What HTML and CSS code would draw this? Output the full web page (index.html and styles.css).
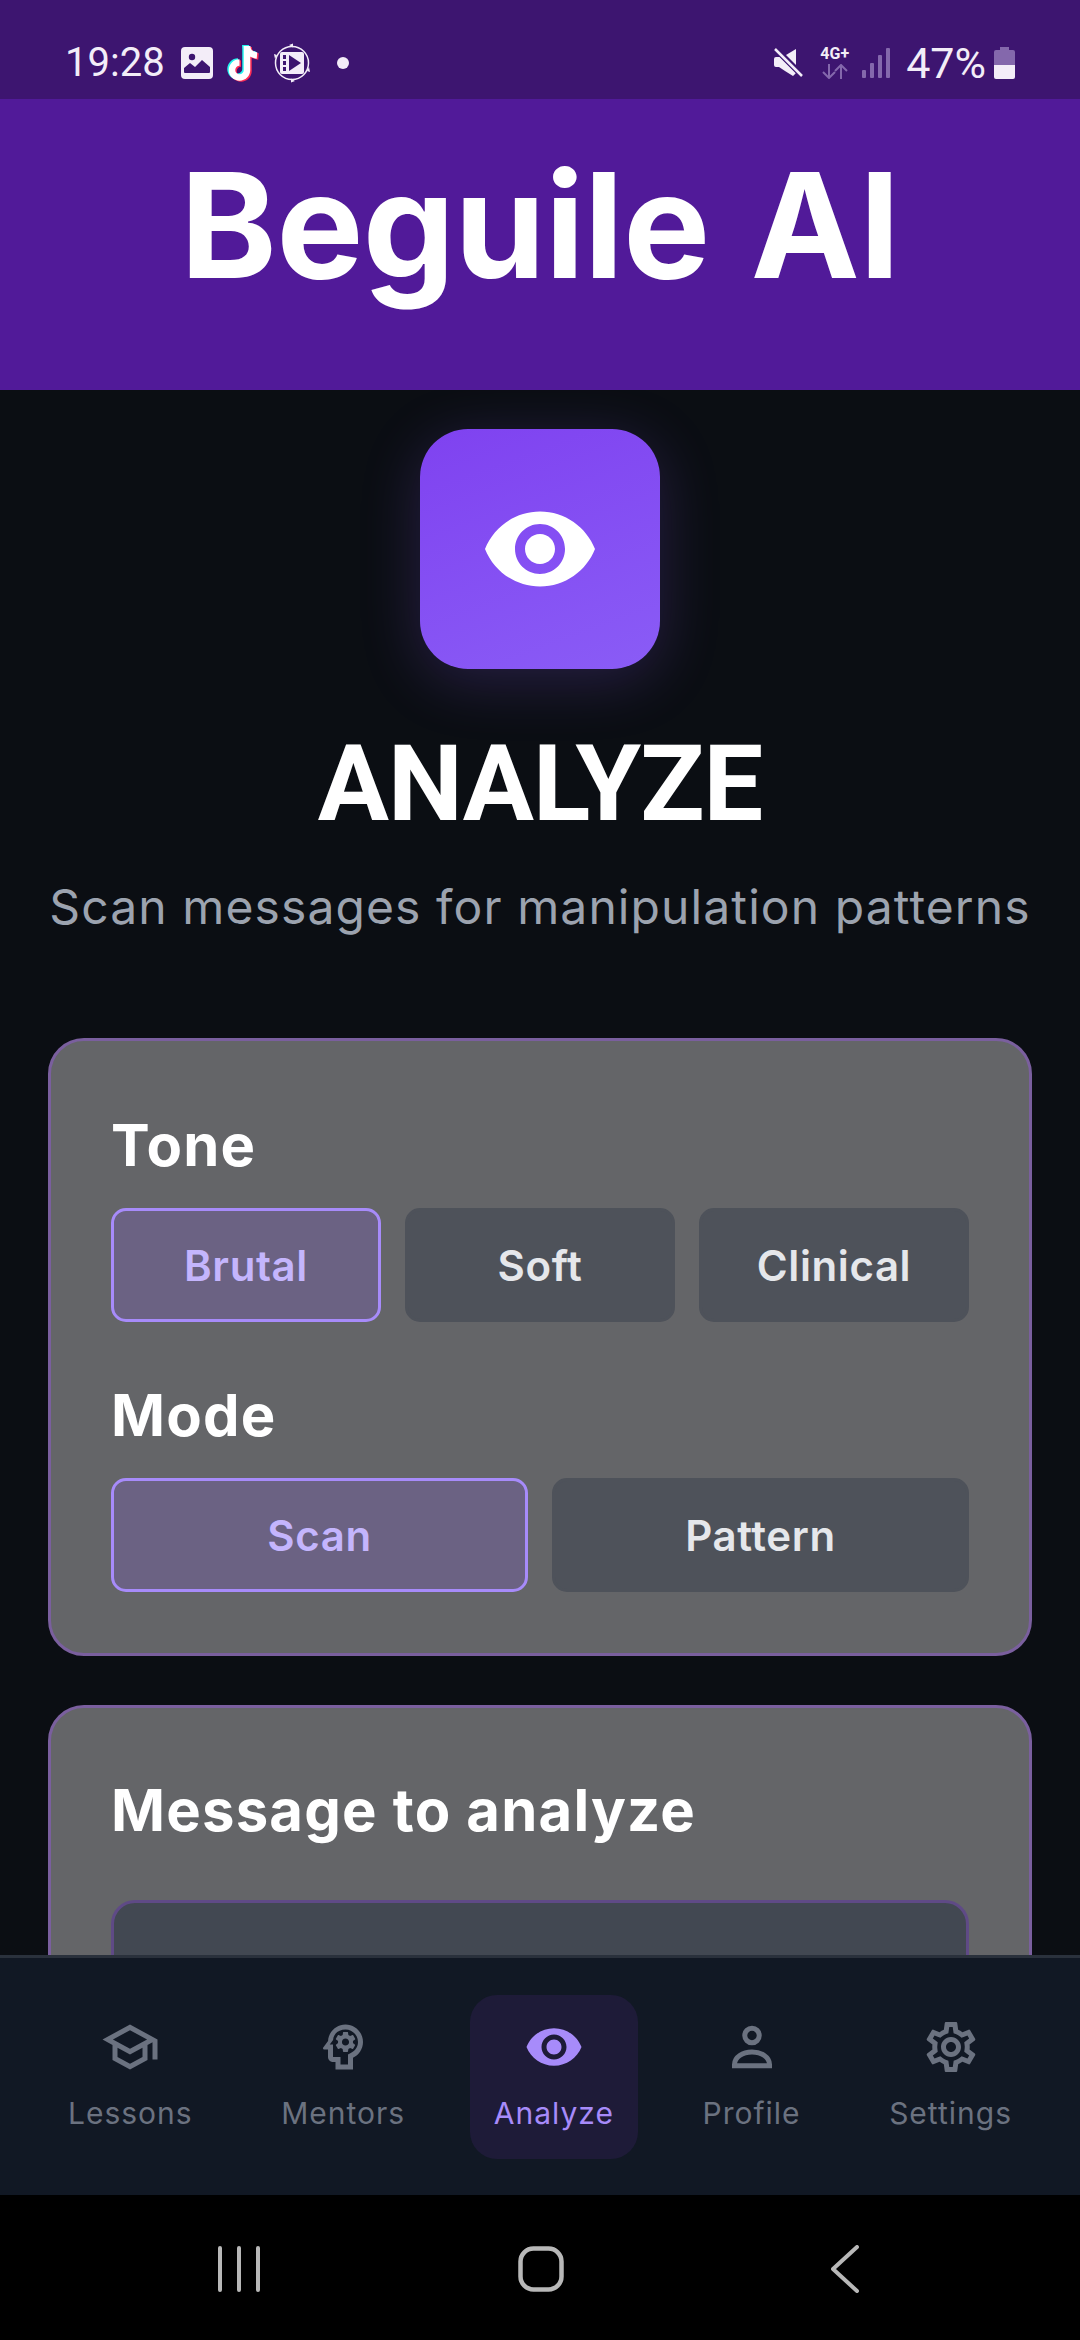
FILE: index.html
```html
<!DOCTYPE html>
<html>
<head>
    <title>Beguile AI</title>
    <meta name="viewport" content="width=device-width, initial-scale=1">
    <link rel="stylesheet" href="styles.css">
</head>
<body>
    <div class="app">
        <div class="status-bar">
            <div class="status-left">
                <span class="time">19:28</span>
                <svg class="ic-gallery" width="32" height="32" viewBox="0 0 32 32">
                    <rect width="32" height="32" rx="4" fill="#f3edf8"/>
                    <circle cx="11" cy="10" r="3.2" fill="#3d1570"/>
                    <path d="M3 25v-4l6-5 5 4 7-7 8 7v5q0 1-1 1H4q-1 0-1-1z" fill="#3d1570"/>
                    <path d="M5 28h22v1H5z" fill="#f3edf8"/>
                </svg>
                <svg class="ic-tiktok" width="36" height="40" viewBox="0 0 36 40" fill="none">
                    <g stroke-width="6.5">
                        <path d="M20 3v24a7.5 7.5 0 1 1-7.5-7.5" stroke="#25f4ee" transform="translate(-1.5 -1)"/>
                        <path d="M20 3c0 5 4 9 10 9.500" stroke="#25f4ee" transform="translate(-1.500 -1)"/>
                        <path d="M20 3v24a7.5 7.5 0 1 1-7.5-7.5" stroke="#fe2c55" transform="translate(1.500 1)"/>
                        <path d="M20 3c0 5 4 9 10 9.500" stroke="#fe2c55" transform="translate(1.500 1)"/>
                        <path d="M20 3v24a7.500 7.500 0 1 1-7.500-7.500" stroke="#fff"/>
                        <path d="M20 3c0 5 4 9 10 9.500" stroke="#fff"/>
                    </g>
                </svg>
                <svg class="ic-video" width="36" height="40" viewBox="0 0 36 40" fill="none">
                    <circle cx="18" cy="20" r="16.500" stroke="#f3edf8" stroke-width="1.500"/>
                    <path d="M15 2l4-1.500v4zM21 38l-4 1.500v-4zM33 28l2-4 1 5zM3 12l-2 4-1-5z" fill="#f3edf8"/>
                    <rect x="6" y="9" width="24" height="22" rx="2" fill="#f3edf8"/>
                    <path d="M9 12h3v4H9zM9 18h3v4H9zM9 24h3v4H9z" fill="#3d1570"/>
                    <path d="M15 12l12 8-12 8z" fill="#3d1570"/>
                </svg>
                <span class="status-dot"></span>
            </div>
            <div class="status-right">
                <svg class="ic-mute" width="30" height="30" viewBox="0 0 30 30">
                    <path d="M1 11q0-2 2-2h4l4 4 12 12-3 3-8-5-6-4H3q-2 0-2-2z" fill="#f3edf8"/>
                    <path d="M13 7l10-6v16z" fill="#f3edf8"/>
                    <path d="M3 2l26 26" stroke="#3d1570" stroke-width="5"/>
                    <path d="M2 1l27 27" stroke="#f3edf8" stroke-width="2.500"/>
                </svg>
                <div class="net">
                    <span class="net-label">4G+</span>
                    <svg width="26" height="15" viewBox="0 0 26 15" fill="none" stroke="#8468ac" stroke-width="2">
                        <path d="M7 0v14M1 8l6 6 6-6"/>
                        <path d="M19 15V1M13 7l6-6 6 6"/>
                    </svg>
                </div>
                <svg class="ic-signal" width="28" height="30" viewBox="0 0 28 30" fill="#8468ac">
                    <rect x="0" y="22" width="4" height="8" rx="1"/>
                    <rect x="8" y="15" width="4" height="15" rx="1"/>
                    <rect x="16" y="7" width="4" height="23" rx="1"/>
                    <rect x="24" y="0" width="4" height="30" rx="1"/>
                </svg>
                <span class="battery-text">47%</span>
                <svg class="ic-battery" width="21" height="32" viewBox="0 0 21 32">
                    <path d="M6 0h9v3h4q2 0 2 2v13H0V5q0-2 2-2h4z" fill="#8468ac"/>
                    <path d="M0 18h21v12q0 2-2 2H2q-2 0-2-2z" fill="#f3edf8"/>
                </svg>
            </div>
        </div>

        <header class="app-header">Beguile AI</header>

        <main class="content">
            <div class="hero-icon">
                <svg width="120" height="120" viewBox="0 0 24 24" fill="#fff">
                    <path d="M12 4.500C7 4.500 2.730 7.610 1 12c1.730 4.390 6 7.500 11 7.500s9.270-3.110 11-7.500c-1.730-4.390-6-7.500-11-7.500zM12 17c-2.760 0-5-2.240-5-5s2.240-5 5-5 5 2.240 5 5-2.240 5-5 5zm0-8c-1.660 0-3 1.340-3 3s1.340 3 3 3 3-1.340 3-3-1.340-3-3-3z"/>
                </svg>
            </div>
            <h1 class="page-title">ANALYZE</h1>
            <p class="page-sub">Scan messages for manipulation patterns</p>

            <section class="card">
                <h2 class="card-title">Tone</h2>
                <div class="options">
                    <button class="option active">Brutal</button>
                    <button class="option">Soft</button>
                    <button class="option">Clinical</button>
                </div>
                <h2 class="card-title mode-title">Mode</h2>
                <div class="options">
                    <button class="option active">Scan</button>
                    <button class="option">Pattern</button>
                </div>
            </section>

            <section class="card card-message">
                <h2 class="card-title">Message to analyze</h2>
                <div class="message-input"></div>
            </section>
        </main>

        <nav class="tabs">
            <div class="tab">
                <svg width="60" height="60" viewBox="0 0 24 24" fill="#6b7280"><path d="M12 3L1 9l4 2.180v6L12 21l7-3.820v-6l2-1.090V17h2V9L12 3zm6.820 6L12 12.720 5.180 9 12 5.280 18.820 9zM17 15.990l-5 2.730-5-2.730v-3.720L12 15l5-2.730v3.720z"/></svg>
                <span>Lessons</span>
            </div>
            <div class="tab">
                <svg width="60" height="60" viewBox="0 0 24 24" fill="#6b7280"><path d="M13 3C9.250 3 6.200 5.940 6.020 9.640L4.100 12.200C3.850 12.530 4.090 13 4.500 13H6v3c0 1.100.9 2 2 2h1v3h7v-4.680c2.360-1.120 4-3.530 4-6.320C20 6.130 16.870 3 13 3zm1 12.970V19h-3v-3H8v-5H6.700l1.330-1.770C8.210 6.570 10.350 5 13 5c2.760 0 5 2.240 5 5 0 2.090-1.290 3.880-4 4.970z"/><path d="M15.820 7.220l-1 .4c-.21-.16-.43-.29-.67-.39L14 6.170c-.02-.1-.1-.17-.2-.17h-1.600c-.1 0-.18.07-.19.17l-.15 1.060c-.24.1-.47.23-.67.39l-1-.4c-.09-.03-.2 0-.24.09l-.8 1.380c-.05.09-.03.2.05.26l.85.66c-.03.12-.05.26-.05.39s.01.26.03.39l-.84.66c-.08.06-.1.17-.05.25l.8 1.390c.05.09.15.12.25.09l.99-.4c.21.16.43.29.68.39l.14 1.060c.02.1.1.17.2.17h1.600c.1 0 .18-.07.2-.17l.15-1.060c.24-.1.47-.23.67-.39l.99.4c.09.04.2 0 .24-.09l.8-1.390c.05-.09.03-.19-.05-.25l-.83-.66c.02-.13.03-.26.03-.39 0-.14-.01-.27-.03-.39l.85-.66c.08-.06.1-.17.05-.26l-.8-1.380c-.05-.09-.16-.12-.25-.09zM13 11.430c-.79 0-1.430-.64-1.430-1.430s.64-1.430 1.430-1.430 1.430.64 1.430 1.430-.64 1.430-1.430 1.430z"/></svg>
                <span>Mentors</span>
            </div>
            <div class="tab active">
                <svg width="60" height="60" viewBox="0 0 24 24" fill="#a78bfa"><path d="M12 4.500C7 4.500 2.730 7.610 1 12c1.730 4.390 6 7.500 11 7.500s9.270-3.110 11-7.500c-1.730-4.390-6-7.500-11-7.500zM12 17c-2.760 0-5-2.240-5-5s2.240-5 5-5 5 2.240 5 5-2.240 5-5 5zm0-8c-1.660 0-3 1.340-3 3s1.340 3 3 3 3-1.340 3-3-1.340-3-3-3z"/></svg>
                <span>Analyze</span>
            </div>
            <div class="tab">
                <svg width="60" height="60" viewBox="0 0 24 24" fill="none" stroke="#6b7280" stroke-width="2"><circle cx="12" cy="7.400" r="2.900"/><path d="M5 19.500v-.5c0-3 3.200-5 7-5s7 2 7 5v.5z"/></svg>
                <span>Profile</span>
            </div>
            <div class="tab">
                <svg width="60" height="60" viewBox="0 0 24 24" fill="#6b7280"><path d="M19.430 12.980c.04-.32.07-.64.07-.98 0-.34-.03-.66-.07-.98l2.110-1.650c.19-.15.24-.42.12-.64l-2-3.460c-.09-.16-.26-.25-.44-.25-.06 0-.12.01-.17.03l-2.490 1c-.52-.4-1.080-.73-1.690-.98l-.38-2.650C14.460 2.180 14.250 2 14 2h-4c-.25 0-.46.18-.49.42l-.38 2.650c-.61.25-1.170.59-1.690.98l-2.490-1c-.06-.02-.12-.03-.18-.03-.17 0-.34.09-.43.25l-2 3.460c-.13.22-.07.49.12.64l2.110 1.650c-.04.32-.07.65-.07.98 0 .33.03.66.07.98l-2.110 1.650c-.19.15-.24.42-.12.64l2 3.460c.09.16.26.25.44.25.06 0 .12-.01.17-.03l2.490-1c.52.4 1.080.73 1.690.98l.38 2.650c.03.24.24.42.49.42h4c.25 0 .46-.18.49-.42l.38-2.650c.61-.25 1.170-.59 1.690-.98l2.490 1c.06.02.12.03.18.03.17 0 .34-.09.43-.25l2-3.460c.12-.22.07-.49-.12-.64l-2.110-1.650zm-1.980-1.710c.04.31.05.52.05.73 0 .21-.02.43-.05.73l-.14 1.130.89.7 1.080.84-.7 1.210-1.270-.51-1.040-.42-.9.68c-.43.32-.84.56-1.250.73l-1.060.43-.16 1.130-.2 1.350h-1.400l-.19-1.350-.16-1.130-1.060-.43c-.43-.18-.83-.41-1.230-.71l-.91-.7-1.060.43-1.270.51-.7-1.210 1.080-.84.89-.7-.14-1.130c-.03-.31-.05-.54-.05-.74s.02-.43.05-.73l.14-1.130-.89-.7-1.080-.84.7-1.210 1.270.51 1.040.42.9-.68c.43-.32.84-.56 1.250-.73l1.060-.43.16-1.130.2-1.350h1.390l.19 1.350.16 1.130 1.060.43c.43.18.83.41 1.230.71l.91.7 1.060-.43 1.270-.51.7 1.210-1.070.85-.89.7.14 1.130zM12 8c-2.210 0-4 1.790-4 4s1.790 4 4 4 4-1.790 4-4-1.790-4-4-4zm0 6c-1.100 0-2-.9-2-2s.9-2 2-2 2 .9 2 2-.9 2-2 2z"/></svg>
                <span>Settings</span>
            </div>
        </nav>

        <div class="system-bar">
            <svg class="sys-recents" width="44" height="46" viewBox="0 0 44 46" stroke="#b8b8b8" stroke-width="4" stroke-linecap="round">
                <path d="M3 2v42M22 2v42M41 2v42"/>
            </svg>
            <svg class="sys-home" width="46" height="46" viewBox="0 0 46 46" fill="none" stroke="#b8b8b8" stroke-width="4.500">
                <rect x="2.500" y="2.500" width="41" height="41" rx="13"/>
            </svg>
            <svg class="sys-back" width="28" height="48" viewBox="0 0 28 48" fill="none" stroke="#b8b8b8" stroke-width="4" stroke-linecap="round" stroke-linejoin="round">
                <path d="M26 2L2 24l24 22"/>
            </svg>
        </div>
    </div>
</body>
</html>
```

FILE: styles.css
```css
* {
    box-sizing: border-box;
}
html, body {
    margin: 0;
    padding: 0;
}
body {
    font-family: Inter, "Liberation Sans", sans-serif;
    background-color: #000;
}
.app {
    width: 1080px;
    height: 2340px;
    display: flex;
    flex-direction: column;
    overflow: hidden;
    background-color: #0b0e13;
}

/* status bar */
.status-bar {
    height: 99px;
    flex-shrink: 0;
    background-color: #3d1570;
    color: #f3edf8;
    display: flex;
    align-items: center;
    justify-content: space-between;
    padding: 26px 65px 0 65px;
    font-family: Roboto, sans-serif;
}
.status-left, .status-right {
    display: flex;
    align-items: center;
}
.time {
    font-size: 40px;
    font-weight: 400;
    width: 116px;
}
.ic-tiktok {
    margin-left: 14px;
}
.ic-video {
    margin-left: 11px;
}
.status-dot {
    width: 12px;
    height: 12px;
    border-radius: 50%;
    background-color: #f3edf8;
    margin-left: 27px;
}
.net {
    display: flex;
    flex-direction: column;
    align-items: center;
    margin-left: 17px;
    line-height: 14px;
}
.net-label {
    font-size: 16px;
    font-weight: 700;
    margin-bottom: 3px;
}
.ic-signal {
    margin-left: 13px;
}
.battery-text {
    font-size: 43px;
    font-weight: 400;
    margin-left: 16px;
}
.ic-battery {
    margin-left: 8px;
}

/* app header */
.app-header {
    height: 291px;
    flex-shrink: 0;
    background-color: #511a99;
    color: #fff;
    font-size: 146px;
    font-weight: 700;
    letter-spacing: -0.5px;
    word-spacing: 7px;
    display: flex;
    align-items: center;
    justify-content: center;
    padding-bottom: 40px;
}

/* main content */
.content {
    flex: 1;
    min-height: 0;
    overflow: hidden;
    padding: 39px 48px 0;
}
.hero-icon {
    width: 240px;
    height: 240px;
    margin: 0 auto;
    border-radius: 48px;
    background: linear-gradient(160deg, #7f42f0, #8a5cf6);
    box-shadow: 0 12px 60px rgba(139, 92, 246, 0.22);
    display: flex;
    align-items: center;
    justify-content: center;
}
.page-title {
    margin: 52px 0 0;
    font-family: Roboto, Inter, sans-serif;
    font-size: 106px;
    line-height: 126px;
    font-weight: 700;
    letter-spacing: -1px;
    color: #fff;
    text-align: center;
}
.page-sub {
    margin: 30px 0 0;
    font-size: 48px;
    line-height: 60px;
    letter-spacing: 1.1px;
    color: #9ca3af;
    text-align: center;
    white-space: nowrap;
}
.card {
    margin-top: 101px;
    background-color: #646568;
    border: 3px solid #7a5f9e;
    border-radius: 36px;
    padding: 66px 60px 61px;
}
.card-message {
    margin-top: 49px;
    padding-top: 64px;
}
.card-title {
    margin: 0;
    font-size: 58px;
    line-height: 76px;
    font-weight: 700;
    letter-spacing: 1.2px;
    color: #fff;
}
.mode-title {
    margin-top: 55px;
}
.options {
    display: flex;
    gap: 24px;
    margin-top: 25px;
}
.option {
    flex: 1;
    height: 114px;
    border: 3px solid #4e525a;
    border-radius: 15px;
    background-color: #4e525a;
    color: #e5e7eb;
    font-family: Inter, sans-serif;
    font-size: 42px;
    font-weight: 600;
    letter-spacing: 0.6px;
}
.option.active {
    background-color: #6b6283;
    border-color: #a78bfa;
    color: #c4b5fd;
}
.message-input {
    height: 240px;
    margin-top: 52px;
    background-color: #424852;
    border: 3px solid #5f4a86;
    border-radius: 24px;
}

/* bottom tabs */
.tabs {
    height: 240px;
    flex-shrink: 0;
    background-color: #111824;
    border-top: 3px solid #2a313c;
    display: flex;
    align-items: center;
    justify-content: space-between;
    padding: 0 44px;
}
.tab {
    height: 164px;
    padding: 0 24px 6px;
    border-radius: 27px;
    display: flex;
    flex-direction: column;
    align-items: center;
    justify-content: center;
    color: #6b7280;
    font-size: 30px;
    letter-spacing: 1px;
}
.tab svg {
    margin-bottom: 18px;
}
.tab.active {
    background-color: #1e1b38;
    color: #a78bfa;
}

/* android nav */
.system-bar {
    height: 145px;
    flex-shrink: 0;
    background-color: #000;
    display: flex;
    align-items: center;
    padding: 3px 0 0 217px;
}
.sys-home {
    margin-left: 257px;
}
.sys-back {
    margin-left: 267px;
}
```
